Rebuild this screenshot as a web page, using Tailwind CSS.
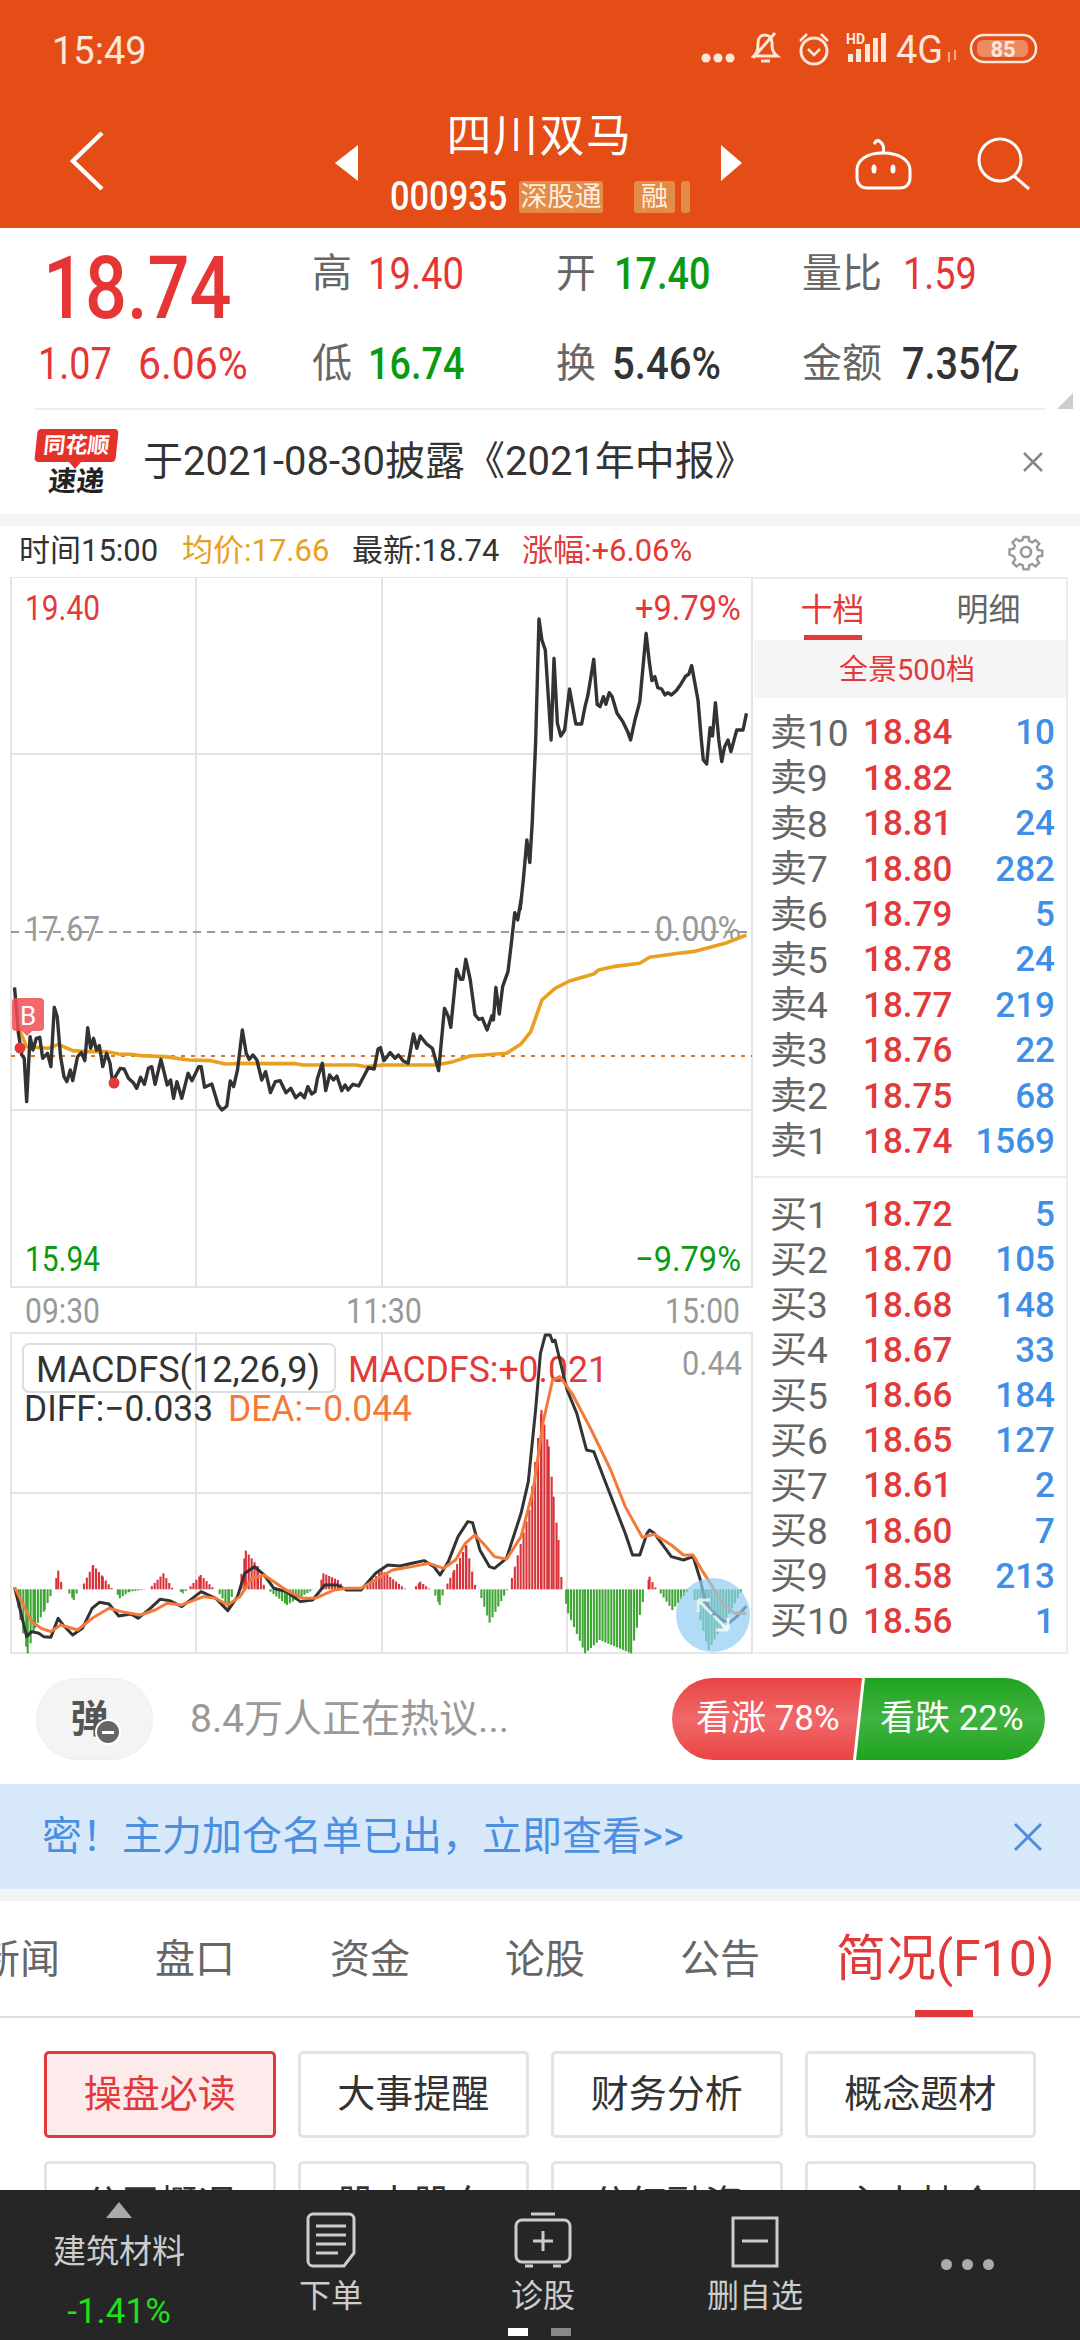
<!DOCTYPE html>
<html lang="zh-CN">
<head>
    <meta charset="UTF-8">
    <title>四川双马</title>
    <script src="https://cdn.jsdelivr.net/npm/@tailwindcss/browser@4"></script>
</head>
<body class="bg-white">
<div class="relative w-[1080px] h-[2340px] overflow-hidden bg-white font-['Roboto','Noto_Sans_CJK_SC',sans-serif]">

    <!-- orange header -->
    <header class="h-[228px] bg-[#e44d15] text-white">
        <div class="h-[100px] flex items-center justify-between pl-[52px]">
            <span class="text-[38px] text-[#fde6da] pt-[2px]">15:49</span>
            <svg width="340" height="50" viewBox="700 25 340 50" class="mr-[40px]" fill="none" stroke="#fde6da" stroke-width="3">
                <g fill="#fde6da" stroke="none"><circle cx="706" cy="58" r="4.5"/><circle cx="718" cy="58" r="4.5"/><circle cx="730" cy="58" r="4.5"/></g>
                <path d="M754 56c4-4 4-8 4-13 0-5 3-8 7-8s7 3 7 8c0 5 0 9 5 13zM761 61h9M753 58l22-25"/>
                <circle cx="814" cy="51" r="13"/><path d="M808 49l6 6 6-6M800 41l7-7M828 41l-7-7" stroke-width="2.5"/>
                <text x="846" y="44" font-size="14" font-weight="700" fill="#fde6da" stroke="none">HD</text>
                <g fill="#fde6da" stroke="none"><rect x="848" y="54" width="5" height="8"/><rect x="856" y="49" width="5" height="13"/><rect x="865" y="44" width="5" height="18"/><rect x="873" y="38" width="5" height="24"/><rect x="881" y="33" width="5" height="29"/></g>
                <text x="896" y="63" font-size="39" fill="#fde6da" stroke="none" textLength="47" lengthAdjust="spacingAndGlyphs">4G</text>
                <path d="M949 52v10M955 50v10" stroke="#f3a787" stroke-width="2"/>
                <rect x="971" y="35" width="65" height="27" rx="13" stroke-width="2.5"/>
                <rect x="977" y="40" width="51" height="17" rx="6" fill="#fde6da" fill-opacity=".4" stroke="none"/>
                <text x="1003" y="57" font-size="22" font-weight="700" text-anchor="middle" fill="#fde6da" stroke="none">85</text>
            </svg>
        </div>
        <div class="h-[128px] grid grid-cols-[335px_407px_338px]">
            <svg width="335" height="128" viewBox="0 100 335 128" fill="none"><path d="M102 133L73 161l29 28" stroke="#fff" stroke-width="4.5"/></svg>
            <div class="flex justify-between">
                <div class="mt-[45px] w-0 h-0 border-y-[18px] border-y-transparent border-r-[23px] border-r-white"></div>
                <div class="w-[363px] flex flex-col items-center">
                    <div class="mt-[11px] h-[52px] text-[45px] leading-[52px] tracking-[1.5px]">四川双马</div>
                    <div class="mt-[17px] w-full h-[34px] pl-[32px] flex items-center">
                        <span class="w-[144px] -mr-[15px] shrink-0 whitespace-nowrap text-[40px] font-medium origin-left scale-x-[.86]">000935</span>
                        <span class="w-[84px] h-[32px] shrink-0 rounded-[3px] bg-[#e28c4a] text-[27px] leading-[32px] text-center text-[#fdeede]">深股通</span>
                        <span class="ml-[31px] w-[41px] h-[32px] shrink-0 rounded-[3px] bg-[#e28c4a] text-[27px] leading-[32px] text-center text-[#fdeede]">融</span>
                        <span class="ml-[6px] w-[9px] h-[32px] shrink-0 rounded-[3px] bg-[#e28c4a]"></span>
                    </div>
                </div>
                <div class="mt-[45px] w-0 h-0 border-y-[18px] border-y-transparent border-l-[21px] border-l-white"></div>
            </div>
            <svg width="338" height="128" viewBox="742 100 338 128" fill="none" stroke="#fff" stroke-width="3">
                <path d="M857 170c0-10 10-17 26-17s27 7 27 17v8c0 6-4 10-10 10h-33c-6 0-10-4-10-10z"/>
                <path d="M883 153c2-5 0-11-6-13M877 140l-3 4"/>
                <ellipse cx="874" cy="169" rx="2.5" ry="4.5" fill="#fff" stroke="none"/><ellipse cx="893" cy="169" rx="2.5" ry="4.5" fill="#fff" stroke="none"/>
                <circle cx="1000" cy="160" r="21"/><path d="M1014 176l15 13"/>
            </svg>
        </div>
    </header>

    <!-- quote -->
    <section class="relative h-[182px]">
        <div class="grid grid-cols-[312px_244px_246px_1fr] grid-rows-[92px_88px]">
            <div class="pl-[43px] pt-[15px]"><span class="inline-block origin-left scale-x-[.84] text-[88px] leading-[90px] font-medium text-[#e53535]">18.74</span></div>
            <div class="flex items-center text-[40px] text-[#666]"><span class="w-[56px]">高</span><span class="inline-block origin-left scale-x-[.85] text-[45px] text-[#e53535]">19.40</span></div>
            <div class="flex items-center text-[40px] text-[#666]"><span class="w-[58px]">开</span><span class="inline-block origin-left scale-x-[.84] text-[45px] font-medium text-[#0a9a12]">17.40</span></div>
            <div class="flex items-center text-[40px] text-[#666]"><span class="w-[101px]">量比</span><span class="inline-block origin-left scale-x-[.84] text-[45px] text-[#e53535]">1.59</span></div>
            <div class="pl-[38px] flex items-center text-[45px] text-[#e53535]"><span class="w-[100px] inline-block origin-left scale-x-[.84]">1.07</span><span class="inline-block origin-left scale-x-[.91]">6.06%</span></div>
            <div class="flex items-center text-[40px] text-[#666]"><span class="w-[56px]">低</span><span class="inline-block origin-left scale-x-[.84] text-[45px] font-medium text-[#0a9a12]">16.74</span></div>
            <div class="flex items-center text-[40px] text-[#666]"><span class="w-[56px]">换</span><span class="inline-block origin-left scale-x-[.89] text-[45px] font-medium text-[#333]">5.46%</span></div>
            <div class="flex items-center text-[40px] text-[#666]"><span class="w-[100px]">金额</span><span class="inline-block origin-left scale-x-[.88] text-[45px] font-medium text-[#333]">7.35亿</span></div>
        </div>
        <div class="absolute right-[7px] top-[165px] w-0 h-0 border-b-[16px] border-b-[#ccc] border-l-[16px] border-l-transparent"></div>
        <div class="absolute bottom-0 left-[35px] right-[35px] h-[2px] bg-[#ececec]"></div>
    </section>

    <!-- notice -->
    <section class="h-[104px] flex items-center pl-[36px] pr-[36px]">
        <div class="w-[81px] h-[66px] shrink-0 relative">
            <div class="h-[33px] rounded-[4px] bg-[#e4322b] text-white text-[22px] leading-[33px] font-bold text-center -skew-x-6">同花顺</div>
            <div class="absolute left-[33px] top-[33px] w-0 h-0 border-x-[6px] border-x-transparent border-t-[7px] border-t-[#e4322b]"></div>
            <div class="mt-[7px] text-[#222] text-[28px] leading-[26px] font-bold text-center -skew-x-6">速递</div>
        </div>
        <div class="ml-[26px] text-[40px] text-[#333] grow whitespace-nowrap">于2021-08-30披露《2021年中报》</div>
        <svg width="22" height="22" viewBox="0 0 22 22" fill="none" stroke="#888" stroke-width="2.5" class="shrink-0"><path d="M2 2l18 18M20 2L2 20"/></svg>
    </section>
    <div class="h-[12px] bg-[#f4f4f4]"></div>

    <!-- time info -->
    <section class="h-[51px] flex items-center text-[31px] whitespace-nowrap pl-[19px] pr-[34px]">
        <span class="w-[163px] text-[#333]">时间15:00</span>
        <span class="w-[170px] text-[#e8a020]">均价:17.66</span>
        <span class="w-[170px] text-[#333]">最新:18.74</span>
        <span class="grow text-[#e23a3a]">涨幅:+6.06%</span>
        <svg width="40" height="40" viewBox="0 0 24 24" fill="none" stroke="#999" stroke-width="1.6"><circle cx="12" cy="12" r="3"/><path d="M10.3 2h3.4l.5 2.8 1.9.8 2.3-1.6 2.4 2.4-1.6 2.3.8 1.9 2.8.5v3.4l-2.8.5-.8 1.9 1.6 2.3-2.4 2.4-2.3-1.6-1.9.8-.5 2.8h-3.4l-.5-2.8-1.9-.8-2.3 1.6-2.4-2.4 1.6-2.3-.8-1.9L1 13.7v-3.4l2.8-.5.8-1.9L3 5.6 5.4 3.2l2.3 1.6 1.9-.8z" transform="translate(1.2 1.2) scale(.9)"/></svg>
    </section>

    <!-- chart + order book -->
    <section class="h-[1077px] flex">
        <svg width="754" height="1077" viewBox="0 577 754 1077" class="shrink-0 font-['Roboto',sans-serif]">
            <g stroke="#e4e4e4" stroke-width="2" fill="none">
                <path d="M10 577H753M10 754H753M10 1110H753M10 1287H753M10 1333H753M10 1493H753M10 1653H753"/>
                <path d="M11 577V1287M196 577V1287M382 577V1287M567 577V1287M752 577V1287M11 1333V1654M196 1333V1654M382 1333V1654M567 1333V1654M752 1333V1654"/>
            </g>
            <path d="M11 932H752" stroke="#999" stroke-width="2" stroke-dasharray="8 6"/>
            <path d="M11 1056H752" stroke="#d9762a" stroke-width="2" stroke-dasharray="4 6"/>

            <g font-size="35">
                <text x="25" y="620" fill="#e23a3a" textLength="75" lengthAdjust="spacingAndGlyphs">19.40</text>
                <text x="635" y="620" fill="#e23a3a" textLength="106" lengthAdjust="spacingAndGlyphs">+9.79%</text>
                <text x="25" y="941" fill="#999" textLength="75" lengthAdjust="spacingAndGlyphs">17.67</text>
                <text x="655" y="941" fill="#999" textLength="86" lengthAdjust="spacingAndGlyphs">0.00%</text>
                <text x="25" y="1271" fill="#0a9a12" textLength="75" lengthAdjust="spacingAndGlyphs">15.94</text>
                <text x="635" y="1271" fill="#0a9a12" textLength="106" lengthAdjust="spacingAndGlyphs">−9.79%</text>
                <text x="25" y="1323" fill="#999" textLength="75" lengthAdjust="spacingAndGlyphs">09:30</text>
                <text x="346" y="1323" fill="#999" textLength="76" lengthAdjust="spacingAndGlyphs">11:30</text>
                <text x="665" y="1323" fill="#999" textLength="75" lengthAdjust="spacingAndGlyphs">15:00</text>
            </g>

            <!-- price and average lines -->
            <g fill="none" stroke-linejoin="round">
                <polyline transform="translate(0 900) scale(.4847 .3333)" vector-effect="non-scaling-stroke" stroke="#e8a020" stroke-width="3.6" points="40,390 55,440 70,442 100,445 120,433 150,452 180,455 220,455 245,462 270,463 290,467 340,470 390,480 435,482 465,492 510,490 555,491 610,491 625,495 735,495 755,500 790,495 900,495 935,485 970,468 1045,460 1075,432 1095,395 1118,300 1145,265 1175,243 1225,222 1235,210 1265,200 1320,190 1340,172 1400,160 1430,155 1500,128 1540,105"/>
                <polyline transform="translate(0 900) scale(.4847 .3333)" vector-effect="non-scaling-stroke" stroke="#333" stroke-width="3.4" points="30,262 38,400 45,465 50,475 55,605 62,410 68,450 75,415 82,412 88,475 98,460 105,500 112,322 118,350 125,470 132,530 138,545 145,510 150,542 160,470 168,458 175,482 181,383 187,445 193,415 199,450 205,437 212,500 220,460 227,490 232,545 248,505 256,507 265,535 275,548 282,565 290,532 298,553 306,505 313,500 320,553 332,478 345,555 352,540 358,595 365,545 375,595 388,520 396,542 410,500 415,500 422,562 437,552 450,615 458,630 468,618 475,543 482,560 490,510 500,390 508,460 514,478 522,465 530,480 540,540 548,515 558,578 568,545 578,542 590,578 600,565 610,593 620,580 628,593 635,560 643,582 650,575 655,535 665,490 672,572 680,525 688,540 695,528 705,572 712,555 718,570 728,553 740,558 752,525 760,503 772,507 780,447 785,443 792,482 805,458 815,475 822,465 832,483 842,490 853,402 860,445 867,408 880,432 892,445 905,512 917,325 925,350 930,382 942,208 950,238 955,238 961,178 970,238 980,345 988,358 995,355 1005,390 1015,347 1018,360 1023,262 1030,342 1037,260 1048,215 1055,130 1062,38 1068,60 1075,0"/>
                <polyline transform="translate(0 570) scale(.4847 .3333)" vector-effect="non-scaling-stroke" stroke="#333" stroke-width="3.4" points="1073,1020 1080,925 1087,810 1093,878 1098,760 1105,520 1112,147 1118,210 1125,240 1137,510 1143,265 1150,460 1157,498 1165,480 1175,357 1188,462 1200,462 1207,410 1213,375 1225,268 1232,403 1238,410 1245,380 1250,403 1257,368 1263,380 1273,430 1285,455 1295,485 1301,510 1310,450 1320,395 1333,190 1340,280 1345,332 1351,320 1357,353 1365,357 1372,375 1378,368 1385,375 1395,362 1405,342 1415,318 1421,313 1427,287 1440,390 1447,510 1451,570 1458,582 1465,473 1470,498 1476,398 1483,510 1489,575 1495,530 1502,510 1508,545 1520,480 1533,480 1540,430"/>
            </g>
            <circle cx="20" cy="1048" r="5.5" fill="#e23a3a"/>
            <circle cx="114" cy="1083" r="5.5" fill="#e23a3a"/>
            <path d="M16 998h24a4 4 0 0 1 4 4v25a4 4 0 0 1-4 4H32l-5 5-5-5h-6a4 4 0 0 1-4-4v-25a4 4 0 0 1 4-4z" fill="#ee4f55" fill-opacity=".85"/>
            <text x="28" y="1025" font-size="26" fill="#fff" text-anchor="middle">B</text>

            <!-- MACD -->
            <g id="hist"></g>
            <rect x="23" y="1344" width="312" height="48" rx="6" fill="none" stroke="#ddd" stroke-width="2"/>
            <text x="36" y="1382" font-size="36" fill="#333" textLength="284" lengthAdjust="spacingAndGlyphs">MACDFS(12,26,9)</text>
            <text x="348" y="1382" font-size="36" fill="#e23a3a" textLength="260" lengthAdjust="spacingAndGlyphs">MACDFS:+0.021</text>
            <text x="24" y="1421" font-size="36" fill="#333" textLength="189" lengthAdjust="spacingAndGlyphs">DIFF:−0.033</text>
            <text x="228" y="1421" font-size="36" fill="#f47a3a" textLength="184" lengthAdjust="spacingAndGlyphs">DEA:−0.044</text>
            <text x="682" y="1375" font-size="33" fill="#999" textLength="60" lengthAdjust="spacingAndGlyphs">0.44</text>
            <g fill="none" stroke-linejoin="round">
                <polyline transform="translate(0 1300) scale(.4847 .3333)" vector-effect="non-scaling-stroke" stroke="#333" stroke-width="3" points="30,862 40,920 55,1010 65,995 80,1000 90,1010 105,1012 120,955 130,975 150,1005 170,985 190,925 205,907 225,912 245,948 270,942 285,955 310,925 330,898 350,902 375,920 415,875 445,895 470,932 490,890 505,820 525,800 545,825 565,865 590,875 620,905 645,900 670,855 695,855 715,870 745,870 775,820 800,795 825,798 850,790 875,782 895,800 908,825 925,785 945,710 965,665 975,668 990,750 1010,800 1020,805 1045,775 1075,640 1090,545 1105,330 1115,160 1125,105 1135,105 1140,125 1145,120 1170,270 1190,340 1210,450 1225,455 1250,550 1290,700 1305,765 1320,765 1335,700 1340,690 1350,700 1385,770 1410,780 1430,770 1445,840 1455,905 1465,930 1490,960 1505,968 1520,950 1540,918"/>
                <polyline transform="translate(0 1300) scale(.4847 .3333)" vector-effect="non-scaling-stroke" stroke="#f47a3a" stroke-width="3" points="30,862 45,905 65,965 85,985 105,995 125,975 160,990 190,955 225,925 250,935 290,945 320,930 345,910 375,915 420,890 445,895 470,915 495,890 520,835 545,825 590,870 625,895 650,895 690,870 715,865 745,865 780,835 810,810 850,800 885,790 915,805 940,780 960,730 980,705 1000,735 1020,770 1045,778 1075,710 1100,570 1120,370 1140,240 1155,230 1180,280 1220,390 1260,510 1290,620 1325,712 1350,703 1385,735 1410,765 1430,765 1450,815 1470,860 1490,910 1515,940 1540,940"/>
            </g>
            <circle cx="713" cy="1615" r="37" fill="#8fcdf5" fill-opacity=".7"/>
            <path d="M698 1600h12M698 1600v12M698 1600l14 14M728 1630h-12M728 1630v-12M728 1630l-14-14" fill="none" stroke="#fff" stroke-opacity=".75" stroke-width="3"/>
        </svg>

        <!-- order book -->
        <div class="w-[314px] border-t-2 border-r-2 border-b-2 border-[#ececec] shrink-0">
            <div class="h-[61px] flex text-[32px]">
                <div class="w-[157px] h-full relative flex items-center justify-center text-[#e23a3a]">十档<div class="absolute bottom-0 left-[50px] w-[58px] h-[5px] bg-[#e23a3a]"></div></div>
                <div class="w-[155px] flex items-center justify-center text-[#666]">明细</div>
            </div>
            <div class="h-[58px] pt-[4px] pr-[6px] bg-[#f5f5f5] flex items-center justify-center text-[29px] text-[#e23a3a]">全景500档</div>
            <div class="pt-[13px] pl-[16px] pr-[11px] text-[35px] font-medium">
                <div class="h-[45.4px] flex items-center"><span class="w-[93px] text-[37px] text-[#666] font-normal">卖10</span><span class="text-[#e23a3a]">18.84</span><span class="ml-auto text-[#3f8fe6]">10</span></div>
                <div class="h-[45.4px] flex items-center"><span class="w-[93px] text-[37px] text-[#666] font-normal">卖9</span><span class="text-[#e23a3a]">18.82</span><span class="ml-auto text-[#3f8fe6]">3</span></div>
                <div class="h-[45.4px] flex items-center"><span class="w-[93px] text-[37px] text-[#666] font-normal">卖8</span><span class="text-[#e23a3a]">18.81</span><span class="ml-auto text-[#3f8fe6]">24</span></div>
                <div class="h-[45.4px] flex items-center"><span class="w-[93px] text-[37px] text-[#666] font-normal">卖7</span><span class="text-[#e23a3a]">18.80</span><span class="ml-auto text-[#3f8fe6]">282</span></div>
                <div class="h-[45.4px] flex items-center"><span class="w-[93px] text-[37px] text-[#666] font-normal">卖6</span><span class="text-[#e23a3a]">18.79</span><span class="ml-auto text-[#3f8fe6]">5</span></div>
                <div class="h-[45.4px] flex items-center"><span class="w-[93px] text-[37px] text-[#666] font-normal">卖5</span><span class="text-[#e23a3a]">18.78</span><span class="ml-auto text-[#3f8fe6]">24</span></div>
                <div class="h-[45.4px] flex items-center"><span class="w-[93px] text-[37px] text-[#666] font-normal">卖4</span><span class="text-[#e23a3a]">18.77</span><span class="ml-auto text-[#3f8fe6]">219</span></div>
                <div class="h-[45.4px] flex items-center"><span class="w-[93px] text-[37px] text-[#666] font-normal">卖3</span><span class="text-[#e23a3a]">18.76</span><span class="ml-auto text-[#3f8fe6]">22</span></div>
                <div class="h-[45.4px] flex items-center"><span class="w-[93px] text-[37px] text-[#666] font-normal">卖2</span><span class="text-[#e23a3a]">18.75</span><span class="ml-auto text-[#3f8fe6]">68</span></div>
                <div class="h-[45.4px] flex items-center"><span class="w-[93px] text-[37px] text-[#666] font-normal">卖1</span><span class="text-[#e23a3a]">18.74</span><span class="ml-auto text-[#3f8fe6]">1569</span></div>
            </div>
            <div class="mt-[11px] h-[2px] bg-[#ececec]"></div>
            <div class="pt-[15px] pl-[16px] pr-[11px] text-[35px] font-medium">
                <div class="h-[45.2px] flex items-center"><span class="w-[93px] text-[37px] text-[#666] font-normal">买1</span><span class="text-[#e23a3a]">18.72</span><span class="ml-auto text-[#3f8fe6]">5</span></div>
                <div class="h-[45.2px] flex items-center"><span class="w-[93px] text-[37px] text-[#666] font-normal">买2</span><span class="text-[#e23a3a]">18.70</span><span class="ml-auto text-[#3f8fe6]">105</span></div>
                <div class="h-[45.2px] flex items-center"><span class="w-[93px] text-[37px] text-[#666] font-normal">买3</span><span class="text-[#e23a3a]">18.68</span><span class="ml-auto text-[#3f8fe6]">148</span></div>
                <div class="h-[45.2px] flex items-center"><span class="w-[93px] text-[37px] text-[#666] font-normal">买4</span><span class="text-[#e23a3a]">18.67</span><span class="ml-auto text-[#3f8fe6]">33</span></div>
                <div class="h-[45.2px] flex items-center"><span class="w-[93px] text-[37px] text-[#666] font-normal">买5</span><span class="text-[#e23a3a]">18.66</span><span class="ml-auto text-[#3f8fe6]">184</span></div>
                <div class="h-[45.2px] flex items-center"><span class="w-[93px] text-[37px] text-[#666] font-normal">买6</span><span class="text-[#e23a3a]">18.65</span><span class="ml-auto text-[#3f8fe6]">127</span></div>
                <div class="h-[45.2px] flex items-center"><span class="w-[93px] text-[37px] text-[#666] font-normal">买7</span><span class="text-[#e23a3a]">18.61</span><span class="ml-auto text-[#3f8fe6]">2</span></div>
                <div class="h-[45.2px] flex items-center"><span class="w-[93px] text-[37px] text-[#666] font-normal">买8</span><span class="text-[#e23a3a]">18.60</span><span class="ml-auto text-[#3f8fe6]">7</span></div>
                <div class="h-[45.2px] flex items-center"><span class="w-[93px] text-[37px] text-[#666] font-normal">买9</span><span class="text-[#e23a3a]">18.58</span><span class="ml-auto text-[#3f8fe6]">213</span></div>
                <div class="h-[45.2px] flex items-center"><span class="w-[93px] text-[37px] text-[#666] font-normal">买10</span><span class="text-[#e23a3a]">18.56</span><span class="ml-auto text-[#3f8fe6]">1</span></div>
            </div>
        </div>
    </section>

    <!-- comment + vote -->
    <section class="h-[130px] flex items-center pl-[36px]">
        <div class="relative w-[117px] h-[82px] rounded-full bg-[#f4f4f4] border border-[#eee] flex items-center justify-center shrink-0">
            <span class="text-[38px] font-bold text-[#555] -ml-[10px]">弹</span>
            <div class="absolute left-[58px] top-[40px] w-[26px] h-[26px] rounded-full bg-[#666] border-2 border-white flex items-center justify-center"><div class="w-[12px] h-[3px] bg-white"></div></div>
        </div>
        <div class="ml-[37px] w-[482px] text-[39px] text-[#999] whitespace-nowrap">8.4万人正在热议...</div>
        <div class="relative w-[373px] h-[82px] rounded-full overflow-hidden shrink-0 text-white text-[35px] whitespace-nowrap">
            <div class="absolute inset-0 bg-linear-to-b from-[#e94343] via-[#f06868] to-[#e94343] [clip-path:polygon(0_0,190px_0,181px_100%,0_100%)]"></div>
            <div class="absolute inset-0 bg-linear-to-b from-[#1ea31e] via-[#3fb33f] to-[#1ea31e] [clip-path:polygon(193px_0,100%_0,100%_100%,184px_100%)]"></div>
            <div class="relative h-full flex items-center"><span class="ml-[24px] w-[184px]">看涨 78%</span><span>看跌 22%</span></div>
        </div>
    </section>

    <!-- blue banner -->
    <section class="h-[105px] bg-[#d8e8fb] flex items-center justify-between pl-[42px] pr-[36px] text-[#4a8fe0]">
        <span class="text-[40px] whitespace-nowrap">密！主力加仓名单已出，立即查看&gt;&gt;</span>
        <svg width="32" height="32" viewBox="0 0 32 32" fill="none" stroke="#4a8fe0" stroke-width="3"><path d="M3 3l26 26M29 3L3 29"/></svg>
    </section>
    <div class="h-[12px] bg-[#f4f4f4]"></div>

    <!-- tabs -->
    <nav class="relative h-[117px] pt-[2px] border-b-2 border-[#ddd] flex items-center gap-[95px] -ml-[20px] w-[1100px] text-[40px] text-[#666] whitespace-nowrap">
        <span>新闻</span><span>盘口</span><span>资金</span><span>论股</span><span>公告</span>
        <span class="-ml-[19px] text-[50px] text-[#e23a3a]">简况(F10)</span>
        <div class="absolute left-[935px] bottom-[-1px] w-[58px] h-[7px] bg-[#e23a3a]"></div>
    </nav>

    <!-- shortcut buttons -->
    <section class="pt-[33px] px-[44px] grid grid-cols-4 gap-x-[22px] gap-y-[23px] text-[38px] text-[#333]">
        <div class="h-[87px] rounded-[5px] border-[3px] border-[#e23a3a] bg-[#fdeaea] text-[#e23a3a] flex items-center justify-center">操盘必读</div>
        <div class="h-[87px] rounded-[5px] border-[3px] border-[#e3e3e3] flex items-center justify-center">大事提醒</div>
        <div class="h-[87px] rounded-[5px] border-[3px] border-[#e3e3e3] flex items-center justify-center">财务分析</div>
        <div class="h-[87px] rounded-[5px] border-[3px] border-[#e3e3e3] flex items-center justify-center">概念题材</div>
        <div class="h-[87px] rounded-[5px] border-[3px] border-[#e3e3e3] flex items-center justify-center">公司概况</div>
        <div class="h-[87px] rounded-[5px] border-[3px] border-[#e3e3e3] flex items-center justify-center">股本股东</div>
        <div class="h-[87px] rounded-[5px] border-[3px] border-[#e3e3e3] flex items-center justify-center">分红融资</div>
        <div class="h-[87px] rounded-[5px] border-[3px] border-[#e3e3e3] flex items-center justify-center">主力持仓</div>
    </section>

    <!-- bottom bar -->
    <footer class="absolute left-0 right-0 bottom-0 h-[150px] bg-[#262626] grid grid-cols-5 pl-[13px] pr-[7px] text-[32px] text-[#ccc] whitespace-nowrap">
        <div class="flex flex-col items-center">
            <div class="mt-[12px] w-0 h-0 border-x-[13px] border-x-transparent border-b-[16px] border-b-[#aaa]"></div>
            <div class="mt-[13px] leading-[42px] text-[33px]">建筑材料</div>
            <div class="mt-[19px] leading-[40px] text-[35px] text-[#1fe01f]">-1.41%</div>
        </div>
        <div class="flex flex-col items-center">
            <svg width="52" height="58" viewBox="0 0 52 58" fill="none" stroke="#ccc" stroke-width="3" class="mt-[21px]"><path d="M8 3h36a5 5 0 0 1 5 5v34L39 55H8a5 5 0 0 1-5-5V8a5 5 0 0 1 5-5zM11 15h30M11 24h30M11 33h30M11 42h22"/></svg>
            <div class="mt-[5px] leading-[44px]">下单</div>
        </div>
        <div class="flex flex-col items-center">
            <svg width="60" height="58" viewBox="0 0 60 58" fill="none" stroke="#ccc" stroke-width="3" class="mt-[21px]"><path d="M18 3h24M9 9h42a6 6 0 0 1 6 6v30a6 6 0 0 1-6 6H9a6 6 0 0 1-6-6V15a6 6 0 0 1 6-6zM30 20v20M20 30h20M12 55h8M40 55h8"/></svg>
            <div class="mt-[5px] leading-[44px]">诊股</div>
        </div>
        <div class="flex flex-col items-center">
            <svg width="50" height="54" viewBox="0 0 50 54" fill="none" stroke="#ccc" stroke-width="3" class="mt-[25px]"><path d="M3 3h44v48H3zM12 26h26"/></svg>
            <div class="mt-[5px] leading-[44px]">删自选</div>
        </div>
        <div class="flex justify-center gap-[10px] pt-[69px]">
            <div class="w-[11px] h-[11px] rounded-full bg-[#aaa]"></div><div class="w-[11px] h-[11px] rounded-full bg-[#aaa]"></div><div class="w-[11px] h-[11px] rounded-full bg-[#aaa]"></div>
        </div>
        <div class="absolute left-[508px] bottom-[4px] flex gap-[23px]"><div class="w-[20px] h-[8px] bg-white"></div><div class="w-[20px] h-[8px] bg-[#888]"></div></div>
    </footer>
</div>

<script>
    // MACD bars: envelope points in the crop's coordinates, one bar every 6 units
    const bars = [
        ['#d9333a', [[108,868],[118,812],[128,868]]],
        ['#d9333a', [[165,868],[190,795],[210,830],[230,868]]],
        ['#d9333a', [[305,868],[335,820],[355,868]]],
        ['#d9333a', [[385,868],[412,825],[440,868]]],
        ['#d9333a', [[490,868],[505,752],[530,800],[545,868]]],
        ['#d9333a', [[655,868],[665,820],[695,840],[710,868]]],
        ['#d9333a', [[750,868],[785,810],[835,868]]],
        ['#d9333a', [[850,868],[865,845],[885,868]]],
        ['#d9333a', [[915,868],[935,810],[960,735],[980,868]]],
        ['#d9333a', [[1048,868],[1060,800],[1090,630],[1115,330],[1130,440],[1140,590],[1150,720],[1158,868]]],
        ['#d9333a', [[1330,868],[1338,830],[1352,868]]],
        ['#d9333a', [[1534,868],[1540,830]]],
        ['#3fa535', [[30,868],[40,960],[55,1060],[70,985],[90,930],[108,868]]],
        ['#3fa535', [[135,868],[150,900],[160,868]]],
        ['#3fa535', [[235,868],[245,895],[265,875],[300,868]]],
        ['#3fa535', [[365,868],[375,880],[385,868]]],
        ['#3fa535', [[445,868],[470,925],[480,868]]],
        ['#3fa535', [[550,868],[590,915],[645,868]]],
        ['#3fa535', [[890,868],[905,915],[915,868]]],
        ['#3fa535', [[985,868],[1008,968],[1045,868]]],
        ['#3fa535', [[1160,868],[1170,940],[1205,1060],[1235,1020],[1300,1060],[1330,868]]],
        ['#3fa535', [[1355,868],[1385,930],[1420,868]]],
        ['#3fa535', [[1425,868],[1460,1050],[1530,868]]]
    ];
    const hist = document.getElementById('hist');
    const ns = 'http://www.w3.org/2000/svg';
    bars.forEach(([color, pts]) => {
        for (let i = 0; i < pts.length - 1; i++) {
            const [x0, y0] = pts[i], [x1, y1] = pts[i + 1];
            for (let x = x0; x < x1; x += 6) {
                const y = y0 + (y1 - y0) * (x - x0) / (x1 - x0);
                const h = Math.abs(y - 868);
                const r = document.createElementNS(ns, 'rect');
                r.setAttribute('x', x * 0.4847);
                r.setAttribute('y', 1300 + (y < 868 ? y : 868) / 3);
                r.setAttribute('width', 2.1);
                r.setAttribute('height', h / 3);
                r.setAttribute('fill', color);
                hist.appendChild(r);
            }
        }
    });
</script>
</body>
</html>
